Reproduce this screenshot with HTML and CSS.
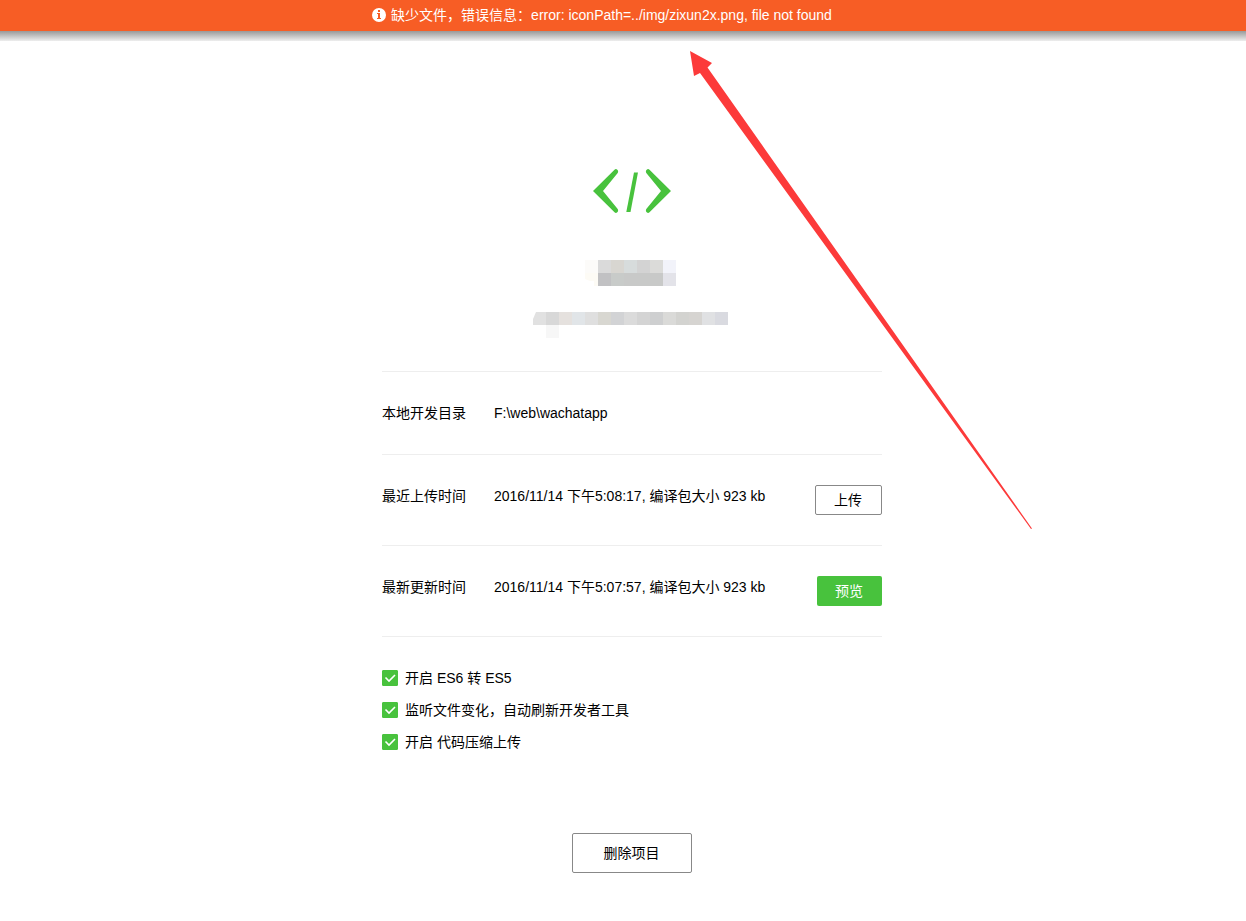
FILE: index.html
```
<!DOCTYPE html>
<html lang="zh-CN">
<head>
  <meta charset="UTF-8">
  <meta name="viewport" content="width=device-width, initial-scale=1.0">
  <title>项目</title>
  <link rel="stylesheet" href="styles.css">
</head>
<body>
  <div class="error-bar" role="alert">
    <svg class="error-icon" width="14" height="14" viewBox="0 0 14 14" aria-hidden="true">
      <circle cx="7" cy="7" r="7" fill="#fff"/>
      <path d="M6 2h2v2H6zM5 5h3v5h1v1H5v-1h1V6H5z" fill="#f75d25"/>
    </svg>
    <span>缺少文件，错误信息：error: iconPath=../img/zixun2x.png, file not found</span>
  </div>
  <div class="error-shadow"></div>

  <main class="project">
    <div class="project-head">
      <svg class="logo" width="78" height="44" viewBox="0 0 78 44" aria-hidden="true">
        <g fill="#48c23d">
          <path d="M0 22 21.500 .7Q23 -.5 24.300 .8 25.700 2.200 24.700 4L10 22 24.700 40Q25.700 41.800 24.300 43.200 23 44.500 21.500 43.300Z"/>
          <path d="M78 22 56.500 .7Q55 -.5 53.700 .8 52.300 2.200 53.300 4L68 22 53.300 40Q52.300 41.800 53.700 43.200 55 44.500 56.500 43.300Z"/>
          <path d="M41 3.500h4L37.500 43h-4.200Z"/>
        </g>
      </svg>
      <svg class="name-mask" width="94" height="26" viewBox="0 0 94 26" aria-hidden="true">
        <path d="M0 0h13v13H0z" fill="#fcfbf9"/>
        <path d="M13 0h13v13H13z" fill="#dadada"/>
        <path d="M26 0h13v13H26z" fill="#d8d6d1"/>
        <path d="M39 0h13v13H39z" fill="#d7dcdc"/>
        <path d="M52 0h13v13H52z" fill="#d3d3d3"/>
        <path d="M65 0h13v13H65z" fill="#dbdbd9"/>
        <path d="M78 0h13v13H78z" fill="#f2f3fa"/>
        <path d="M0 13h13v13H9v-5H5l-5-2z" fill="#fdfbf5"/>
        <path d="M13 13h13v13H13z" fill="#c1c1c3"/>
        <path d="M26 13h13v13H26z" fill="#c8cbc9"/>
        <path d="M39 13h39v13H39z" fill="#c8c9c8"/>
        <path d="M78 13h13v13H78z" fill="#e3e3e9"/>
      </svg>
      <svg class="id-mask" width="198" height="26" viewBox="0 0 198 26" aria-hidden="true">
        <path d="M3 0h10v13H0V7z" fill="#e1e1e1"/>
        <path d="M13 0h13v13H13z" fill="#d8d8d8"/>
        <path d="M26 0h13v13H26z" fill="#e5e1de"/>
        <path d="M39 0h13v13H39z" fill="#e1e5e8"/>
        <path d="M52 0h13v13H52z" fill="#dfdfdf"/>
        <path d="M65 0h13v13H65z" fill="#d8d7d1"/>
        <path d="M78 0h13v13H78z" fill="#d2d3d5"/>
        <path d="M91 0h13v13H91z" fill="#dbdbdb"/>
        <path d="M104 0h13v13h-13z" fill="#d4d4d4"/>
        <path d="M117 0h13v13h-13z" fill="#cecfd0"/>
        <path d="M130 0h13v13h-13z" fill="#dadad8"/>
        <path d="M143 0h13v13h-13z" fill="#d3d3d0"/>
        <path d="M156 0h13v13h-13z" fill="#d6d4d1"/>
        <path d="M169 0h13v13h-13z" fill="#e0e1e3"/>
        <path d="M182 0h13v13h-13z" fill="#d9dae0"/>
        <path d="M13 13h13v13H13z" fill="#f7f7f7"/>
      </svg>
    </div>

    <div class="row">
      <span class="row-label">本地开发目录</span>
      <span class="row-value">F:\web\wachatapp</span>
    </div>
    <div class="row">
      <span class="row-label">最近上传时间</span>
      <span class="row-value">2016/11/14 下午5:08:17, 编译包大小 923 kb</span>
      <button class="btn" type="button">上传</button>
    </div>
    <div class="row">
      <span class="row-label">最新更新时间</span>
      <span class="row-value">2016/11/14 下午5:07:57, 编译包大小 923 kb</span>
      <button class="btn btn-primary" type="button">预览</button>
    </div>

    <div class="options">
      <label class="option"><input type="checkbox" checked>开启 ES6 转 ES5</label>
      <label class="option"><input type="checkbox" checked>监听文件变化，自动刷新开发者工具</label>
      <label class="option"><input type="checkbox" checked>开启 代码压缩上传</label>
    </div>

    <button class="btn btn-delete" type="button">删除项目</button>
  </main>

  <!-- arrow pointing at the error message -->
  <svg class="arrow" width="343" height="479" viewBox="0 0 343 479" aria-hidden="true">
    <path d="M0 0 22 12 17.500 16.500 342 477.500 341 478 10 22 4 25Z" fill="#fc3a3a"/>
  </svg>
</body>
</html>
```
FILE: styles.css
```
* {
  box-sizing: border-box;
}

body {
  position: relative;
  margin: 0;
  background-color: #fff;
  color: #000;
  font-family: "Liberation Sans", Arial, "Noto Sans CJK SC", sans-serif;
  font-size: 14px;
  line-height: 22px;
}

svg {
  display: block;
}

.error-bar {
  display: flex;
  justify-content: center;
  align-items: center;
  gap: 5px;
  min-height: 31px;
  padding: 0 42px 2px 0;
  background-color: #f75d25;
  color: #fff;
}

.error-icon {
  flex: none;
}

.error-shadow {
  height: 10px;
  background: linear-gradient(#999, #eee);
}

.project {
  max-width: 518px;
  margin: 0 auto;
  padding: 128px 0 48px 18px;
}

.project-head {
  display: flex;
  flex-direction: column;
  align-items: center;
  padding-bottom: 33px;
}

.name-mask {
  margin-top: 47px;
}

.id-mask {
  margin-top: 26px;
}

.row {
  display: flex;
  align-items: flex-start;
  padding: 30px 0;
  border-top: 1px solid #eee;
}

.row-label {
  width: 112px;
}

.row-value {
  flex: 1;
}

.btn {
  height: 30px;
  padding: 0 19px 0 18px;
  border: 1px solid #888;
  border-radius: 2px;
  background-color: #fff;
  color: #000;
  font: inherit;
  cursor: pointer;
}

.btn-primary {
  border: none;
  background-color: #48c23d;
  color: #fff;
}

.btn-delete {
  display: block;
  width: 120px;
  height: 40px;
  margin: 80px auto 0;
}

.options {
  display: flex;
  flex-direction: column;
  align-items: flex-start;
  gap: 10px;
  padding-top: 30px;
  border-top: 1px solid #eee;
}

.option {
  display: flex;
  align-items: center;
  gap: 7px;
}

.option input {
  appearance: none;
  width: 16px;
  height: 16px;
  margin: 0;
  border: 1px solid #48c23d;
  border-radius: 1px;
}

.option input:checked {
  background: #48c23d url("data:image/svg+xml,%3Csvg xmlns='http://www.w3.org/2000/svg' viewBox='0 0 16 16'%3E%3Cpath d='M3.500 7.500 7 11 13 5' fill='none' stroke='white' stroke-width='1.600'/%3E%3C/svg%3E") center / 16px 16px no-repeat;
}

.arrow {
  position: absolute;
  top: 51px;
  left: calc(50% + 67px);
  pointer-events: none;
}
```
